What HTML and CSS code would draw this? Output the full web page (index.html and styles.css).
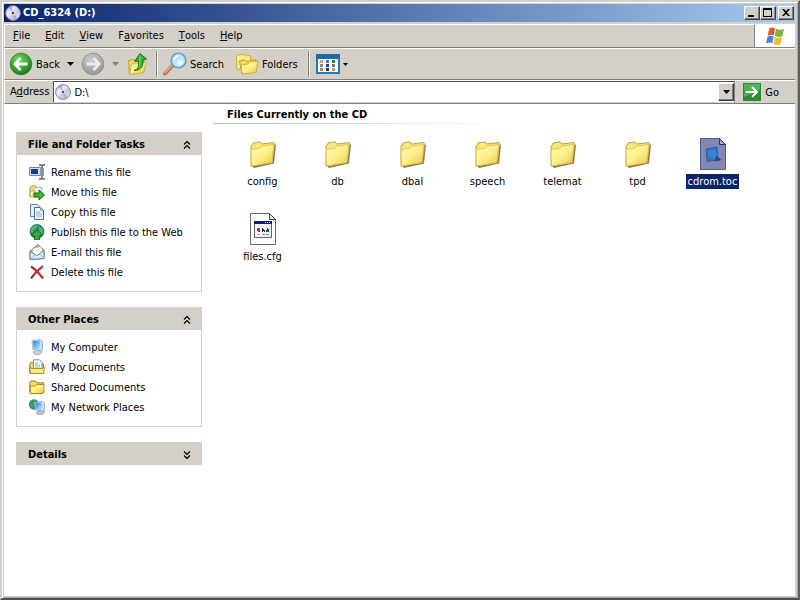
FILE: index.html
```html
<!DOCTYPE html>
<html lang="en">
<head>
    <meta charset="UTF-8">
    <meta name="viewport" content="width=device-width, initial-scale=1.0">
    <title>CD_6324 (D:)</title>
    <link rel="stylesheet" href="styles.css">
</head>
<body>
    <!-- shared icons -->
    <svg class="defs" aria-hidden="true">
        <defs>
            <linearGradient id="gFolder" x1="0" y1="0" x2="1" y2="1">
                <stop offset="0" stop-color="#fffcb8"/>
                <stop offset="0.5" stop-color="#fdf088"/>
                <stop offset="1" stop-color="#e9c440"/>
            </linearGradient>
            <linearGradient id="gScreen" x1="0" y1="0" x2="1" y2="1">
                <stop offset="0" stop-color="#2a62d8"/>
                <stop offset="0.4" stop-color="#58b4f4"/>
                <stop offset="1" stop-color="#b4ecff"/>
            </linearGradient>
            <radialGradient id="gGreen" cx="0.4" cy="0.3" r="0.7">
                <stop offset="0" stop-color="#7ad468"/>
                <stop offset="0.6" stop-color="#38a72c"/>
                <stop offset="1" stop-color="#1d7a18"/>
            </radialGradient>
            <radialGradient id="gGray" cx="0.4" cy="0.3" r="0.7">
                <stop offset="0" stop-color="#cccccc"/>
                <stop offset="1" stop-color="#989898"/>
            </radialGradient>
            <linearGradient id="gDisc" x1="0" y1="0" x2="1" y2="1">
                <stop offset="0" stop-color="#9c9ccc"/>
                <stop offset="0.35" stop-color="#f4f4ff"/>
                <stop offset="0.6" stop-color="#c4c4e4"/>
                <stop offset="1" stop-color="#ffffff"/>
            </linearGradient>
        </defs>
        <symbol id="disc" viewBox="0 0 16 16">
            <circle cx="8" cy="8" r="7.4" fill="url(#gDisc)" stroke="#74749c" stroke-width="0.9"/>
            <path d="M8 8 3 2.6A7 7 0 0 1 7 1zM8 8l5 5.4A7 7 0 0 1 9 15z" fill="#8c8cbc" opacity="0.55"/>
            <circle cx="8" cy="8" r="2.5" fill="#dcdcf0"/>
            <circle cx="8" cy="8" r="1.2" fill="#44446c"/>
        </symbol>
        <symbol id="folder" viewBox="0 0 32 32">
            <path d="M5 28 25 24.500 27.500 6 29 7 27 25.500 7 30z" fill="#6b5c2c" opacity="0.8"/>
            <path d="M4 28V8l1.500-1 .5-2 7-1.200L14.500 6 27 4.500l.5 2L25 24.500z" fill="#f8e67c" stroke="#c2a13c"/>
            <path d="M4 11.500 12.500 10.500 15 8l12-1.500L24.800 24.500 4.500 28z" fill="url(#gFolder)" stroke="#d9bf52" stroke-width="0.8"/>
        </symbol>
        <symbol id="smallFolder" viewBox="0 0 16 16">
            <path d="M.8 13.500V3.500L2 2h4.500L8 3.800h6.500v9.800l-1 1H2z" fill="#f6da63" stroke="#a57b17"/>
            <path d="M1.500 13.500V7h4.700L8 5.500h7v8l-1 1H2z" fill="url(#gFolder)" stroke="#a57b17" stroke-width="0.8"/>
        </symbol>
    </svg>

    <div class="window">
        <header class="titlebar">
            <svg class="icon16"><use href="#disc"/></svg>
            <h1>CD_6324 (D:)</h1>
            <div class="winbuttons">
                <button type="button" aria-label="Minimize"><svg viewBox="0 0 12 10"><path d="M2 7h6v2H2z"/></svg></button>
                <button type="button" aria-label="Maximize"><svg viewBox="0 0 12 10"><path d="M1 0h9v9H1zM2 2v6h7V2z" fill-rule="evenodd"/></svg></button>
                <button type="button" class="close" aria-label="Close"><svg viewBox="0 0 12 10"><path d="M2 1h2l2 2.300L8 1h2L7 4.500 10 8H8L6 5.700 4 8H2l3-3.500z"/></svg></button>
            </div>
        </header>

        <nav class="menubar">
            <button type="button"><u>F</u>ile</button>
            <button type="button"><u>E</u>dit</button>
            <button type="button"><u>V</u>iew</button>
            <button type="button">F<u>a</u>vorites</button>
            <button type="button"><u>T</u>ools</button>
            <button type="button"><u>H</u>elp</button>
            <div class="flag">
                <svg viewBox="0 0 20 20">
                    <path d="M4.200 2.500C6.500 1 8.300 1.300 10 2.300L8.800 9.500C7 8.500 5 8.500 2.800 9.800z" fill="#e5542b"/>
                    <path d="M11 2.700c2.300 1.300 4.500 1.200 8 .2L17.300 10c-2.500 1.200-5 1.200-7.500-.2z" fill="#7cb63a"/>
                    <path d="M2.500 10.700c2.200-1.300 4.200-1.400 6.100-.3L7.400 17.300c-1.800-1-3.900-1-6.400.3z" fill="#4a82d2"/>
                    <path d="M9.600 10.900c2.300 1.300 4.700 1.300 7.500.2l-1.300 7c-2.500 1.300-5 1.200-7.500-.2z" fill="#f4bf2c"/>
                </svg>
            </div>
        </nav>

        <div class="toolbar">
            <button type="button" class="tool">
                <svg class="icon24" viewBox="0 0 24 24">
                    <circle cx="12" cy="12" r="10.800" fill="url(#gGreen)" stroke="#2c7c26" stroke-width="0.8"/>
                    <path d="M11.500 6 6 12l5.500 6M6.500 12H18.500" fill="none" stroke="#fff" stroke-width="2.800"/>
                </svg>
                <span>Back</span>
            </button>
            <button type="button" class="drop" aria-label="Back history"><svg viewBox="0 0 7 4"><path d="M0 0h7L3.500 4z"/></svg></button>
            <button type="button" class="tool" aria-label="Forward" disabled>
                <svg class="icon24" viewBox="0 0 24 24">
                    <circle cx="12" cy="12" r="10.800" fill="url(#gGray)" stroke="#8c8c8c" stroke-width="0.8"/>
                    <path d="M12.500 6 18 12l-5.500 6M17.500 12H5.500" fill="none" stroke="#ececec" stroke-width="2.800"/>
                </svg>
            </button>
            <button type="button" class="drop" aria-label="Forward history" disabled><svg viewBox="0 0 7 4"><path d="M0 0h7L3.500 4z" fill="#808080"/></svg></button>
            <button type="button" class="tool" aria-label="Up">
                <svg class="icon24" viewBox="0 0 24 24">
                    <path d="M2.500 8.500 8 7.500l1.500 2L18 8v12L3.500 22.500z" fill="#f7dc62" stroke="#c69a2a"/>
                    <path d="M5.500 12 20 10l-2.500 10.500L3.500 22.500z" fill="url(#gFolder)" stroke="#d0a93a" stroke-width="0.8"/>
                    <path d="M8 18.500c4-1 5-4 4.500-9.500L8.500 9.500 14 1.500 20.500 7l-3.500.8C17.500 14 15 18.500 8 18.500z" fill="#38ad2e" stroke="#187818"/>
                    <path d="M14 3.500v8c0 2-.5 3.500-1.500 4.800" fill="none" stroke="#8ae070"/>
                </svg>
            </button>
            <div class="sep"></div>
            <button type="button" class="tool">
                <svg class="icon24" viewBox="0 0 24 24">
                    <path d="M9.500 13.500 2 21.500" stroke="#b87050" stroke-width="4" stroke-linecap="round"/>
                    <path d="M9 13 2 20.500" stroke="#eaa480" stroke-width="2" stroke-linecap="round"/>
                    <circle cx="15.500" cy="8.500" r="7.300" fill="#b9eafa" stroke="#6a9ccc" stroke-width="1.600"/>
                    <path d="M10.500 9a5 5 0 0 1 6-5.500c-2.500 1-4.500 3-6 5.500z" fill="#fff"/>
                    <circle cx="17" cy="10.500" r="2.800" fill="#e4faff"/>
                </svg>
                <span>Search</span>
            </button>
            <button type="button" class="tool folders">
                <svg class="icon24" viewBox="0 0 24 24">
                    <path d="M2 17.500 1.500 4 3.500 3 9 2l1.500 2 5-.8V15z" fill="#fbec86" stroke="#d3ad3a"/>
                    <path d="M7 22 4.500 9l5-1 1.500 1.500 10-2 .5 12z" fill="#f7dc62" stroke="#c69a2a"/>
                    <path d="M7 22 6 13l7-1 1.500-2 8.500-.8L21 20.500z" fill="url(#gFolder)" stroke="#cfa638" stroke-width="0.900"/>
                </svg>
                <span>Folders</span>
            </button>
            <div class="sep wide"></div>
            <button type="button" class="tool" aria-label="Views">
                <svg class="icon24" viewBox="0 0 24 24">
                    <path d="M1 4h22v17H1z" fill="#f4fafc" stroke="#2878b4" stroke-width="2"/>
                    <path d="M0 2h24v5H0z" fill="#1e68b0"/>
                    <path d="M4 8h3v3H4z" fill="#d0a080"/><path d="M10 8h3v3h-3z" fill="#4878b8"/><path d="M16 8h3v3h-3z" fill="#30803c"/>
                    <path d="M4 12h3v3H4z" fill="#808898"/><path d="M10 12h3v3h-3z" fill="#303c88"/><path d="M16 12h3v3h-3z" fill="#707880"/>
                    <path d="M4 16h3v3H4z" fill="#b88060"/><path d="M10 16h3v3h-3z" fill="#303848"/><path d="M16 16h3v3h-3z" fill="#c89070"/>
                </svg>
                <svg class="arrow" viewBox="0 0 5 3"><path d="M0 0h5L2.500 3z"/></svg>
            </button>
        </div>

        <form class="addressbar">
            <label for="address">A<u>d</u>dress</label>
            <div class="combo">
                <svg class="icon16"><use href="#disc"/></svg>
                <input type="text" id="address" value="D:\">
                <button type="button" class="pick" aria-label="Show addresses"><svg viewBox="0 0 7 4"><path d="M0 0h7L3.500 4z"/></svg></button>
            </div>
            <button type="button" class="go">
                <svg viewBox="0 0 18 18">
                    <path d="M0 0h18v18H0z" fill="#2c8c34"/>
                    <path d="M1 1h16v6L1 14z" fill="#55ad54"/>
                    <path d="M9 4l5 5-5 5M3 9h10" fill="none" stroke="#fff" stroke-width="2"/>
                </svg>
                <span>Go</span>
            </button>
        </form>

        <div class="content">
            <aside class="sidebar">
                <section class="panel">
                    <h2>File and Folder Tasks
                        <button type="button" aria-label="Collapse"><svg viewBox="0 0 8 8"><path d="M1 3.500l3-3 3 3M1 7.500l3-3 3 3" fill="none" stroke="#000" stroke-width="1.200"/></svg></button>
                    </h2>
                    <ul>
                        <li><a href="#">
                            <svg viewBox="0 0 16 16">
                                <path d="M.5 3.500h11v8H.5z" fill="#d8e0f0" stroke="#7484a4"/>
                                <path d="M2 5h7v5H2z" fill="#183c9c"/>
                                <path d="M10 1h2l1 1 1-1h2M13 2v12M10 15h2l1-1 1 1h2" fill="none" stroke="#50647c" stroke-width="1.400"/>
                                <path d="M11 4h1v8h-1zM14 4h1v8h-1z" fill="#8ca0b8"/>
                            </svg><span>Rename this file</span></a></li>
                        <li><a href="#">
                            <svg viewBox="0 0 16 16">
                                <path d="M1 12.500V3.500L2.500 2h4L8 3.500h4.500v9z" fill="#f8df74" stroke="#b18f35"/>
                                <path d="M5 4l6-1 2 2v7l-7 1z" fill="#f5f7ff" stroke="#a1a9bb" stroke-width="0.800"/>
                                <path d="M1 7h5l1 6H1z" fill="#fbeb96" stroke="#b18f35" stroke-width="0.700"/>
                                <path d="M5 9h5V6l5.500 5-5.500 5v-3H5z" fill="#3fb52f" stroke="#176a17"/>
                            </svg><span>Move this file</span></a></li>
                        <li><a href="#">
                            <svg viewBox="0 0 16 16">
                                <path d="M1.500.5h7l2 2v10h-9z" fill="#e2edf9" stroke="#5f87ab"/>
                                <path d="M5.500 3.500h6l3 3v9h-9z" fill="#f7fbff" stroke="#457498"/>
                                <path d="M11.500 3.500v3h3M7 8h4M7 10h6M7 12h6" fill="none" stroke="#83a9c9"/>
                            </svg><span>Copy this file</span></a></li>
                        <li><a href="#">
                            <svg viewBox="0 0 16 16">
                                <circle cx="8" cy="7.500" r="7" fill="#2a7f9e" stroke="#226552" stroke-width="0.800"/>
                                <path d="M2 4.500C4 1 7 .8 9 1.500L7 5 4.500 6 4 9 1.500 8zM10 2.500l4 2.500v4.500L11 8l-1.500-3z" fill="#55b757"/>
                                <path d="M8 6l6 5.500h-3.500V16h-5v-4.500H2z" fill="#35ab34" stroke="#176a1d" stroke-width="0.900"/>
                            </svg><span>Publish this file to the Web</span></a></li>
                        <li><a href="#">
                            <svg viewBox="0 0 16 16">
                                <path d="M1 7l8-6.500L15 6v8.500L1 15.500z" fill="#a5c5e4" stroke="#6184a8"/>
                                <path d="M3.500 4.500l8-2 2 3-1 6H4z" fill="#fffbe9" stroke="#d2a26b" stroke-width="0.800"/>
                                <path d="M1 7.500l7 4L15 6.500v8L1 15.500z" fill="#dceefa" stroke="#6184a8"/>
                                <path d="M1 15l5.500-4.500M15 14l-5-4" stroke="#8aa8c4" stroke-width="0.800"/>
                            </svg><span>E-mail this file</span></a></li>
                        <li><a href="#">
                            <svg viewBox="0 0 16 16">
                                <path d="M2 2.500C5 4.500 10 9 14 14.500M14 2C9 6 5 10 2 14.500" fill="none" stroke="#b3263c" stroke-width="2.200"/>
                            </svg><span>Delete this file</span></a></li>
                    </ul>
                </section>

                <section class="panel">
                    <h2>Other Places
                        <button type="button" aria-label="Collapse"><svg viewBox="0 0 8 8"><path d="M1 3.500l3-3 3 3M1 7.500l3-3 3 3" fill="none" stroke="#000" stroke-width="1.200"/></svg></button>
                    </h2>
                    <ul>
                        <li><a href="#">
                            <svg viewBox="0 0 16 16">
                                <path d="M4 13l5-2 4 1.500-2 2.800-5 .4z" fill="#d4cce4" stroke="#a092ac" stroke-width="0.700"/>
                                <path d="M3 1.500 11.500.5 13.500 2v9l-2 .8-7.500-1.300z" fill="#d4dcf0" stroke="#8ea6cd" stroke-width="0.800"/>
                                <path d="M4 2.300l7-.8v9L4.800 9.600z" fill="url(#gScreen)"/>
                            </svg><span>My Computer</span></a></li>
                        <li><a href="#">
                            <svg viewBox="0 0 16 16">
                                <path d="M.8 14V5l1-1.500h3L6 5h8.500v9z" fill="#f3d457" stroke="#a57b17"/>
                                <path d="M4.500.8h6l2.500 2.500V11h-8.500z" fill="#f8fbff" stroke="#7991b5"/>
                                <path d="M6 4h3M6 6h5M6 8h5" stroke="#8eaed1"/>
                                <path d="M.8 8.500L3 9.500h11l1.500-1.500-.7 6.500H1.500z" fill="#fae889" stroke="#a57b17" stroke-width="0.800"/>
                            </svg><span>My Documents</span></a></li>
                        <li><a href="#"><svg><use href="#smallFolder"/></svg><span>Shared Documents</span></a></li>
                        <li><a href="#">
                            <svg viewBox="0 0 16 16">
                                <circle cx="5" cy="5.500" r="4.800" fill="#2f8f98" stroke="#276771" stroke-width="0.700"/>
                                <path d="M2 3c2-2 4-2 5-1L5 5l-1 4-3-3z" fill="#3fa648"/>
                                <path d="M7 13.500l5-2 3.500 1.200-2 2.600-4.500.4z" fill="#cdc2de" stroke="#927ea5" stroke-width="0.700"/>
                                <path d="M5.500 3.500l8-1 2 1.300v7.700l-2 .7-7-1.200z" fill="#d4dcf0" stroke="#8ea6cd" stroke-width="0.800"/>
                                <path d="M6.500 4.300l6.500-.8v7.500l-6-.9z" fill="url(#gScreen)"/>
                            </svg><span>My Network Places</span></a></li>
                    </ul>
                </section>

                <section class="panel">
                    <h2>Details
                        <button type="button" aria-label="Expand"><svg viewBox="0 0 8 8"><path d="M1 .5l3 3 3-3M1 4.500l3 3 3-3" fill="none" stroke="#000" stroke-width="1.200"/></svg></button>
                    </h2>
                </section>
            </aside>

            <main class="files">
                <h2>Files Currently on the CD</h2>
                <div class="grid">
                    <a href="#" class="file"><svg><use href="#folder"/></svg><span>config</span></a>
                    <a href="#" class="file"><svg><use href="#folder"/></svg><span>db</span></a>
                    <a href="#" class="file"><svg><use href="#folder"/></svg><span>dbal</span></a>
                    <a href="#" class="file"><svg><use href="#folder"/></svg><span>speech</span></a>
                    <a href="#" class="file"><svg><use href="#folder"/></svg><span>telemat</span></a>
                    <a href="#" class="file"><svg><use href="#folder"/></svg><span>tpd</span></a>
                    <a href="#" class="file selected">
                        <svg viewBox="0 0 32 32">
                            <path d="M3.500.5h19l6 6v25h-25z" fill="#8087b4" stroke="#4f5a8a"/>
                            <path d="M22.500.5v6h6z" fill="#a1a7c8" stroke="#26356f"/>
                            <path d="M9 11l11-2 1 10 3 3-5 .5-9 1z" fill="#3b6cb8" stroke="#2f559e" stroke-width="0.700"/>
                            <circle cx="15.500" cy="15.500" r="4.500" fill="#2d86d8"/>
                            <path d="M19 18l5 4-6 1z" fill="#1c4496"/>
                        </svg><span>cdrom.toc</span></a>
                    <a href="#" class="file">
                        <svg viewBox="0 0 32 32">
                            <path d="M3.500.5h19l6 6v25h-25z" fill="#fff" stroke="#686868"/>
                            <path d="M22.500.5v6h6z" fill="#e4e4e4" stroke="#484848"/>
                            <path d="M7.500 8.500h17v16h-17z" fill="#f4f4f4" stroke="#606060"/>
                            <path d="M7 8h18v3H7z" fill="#10187c"/>
                            <path d="M18 9h1v1h-1zM20 9h1v1h-1zM22 9h1v1h-1z" fill="#fff"/>
                            <path d="M10 15h3v3h-3zM11 18h2v1h-2z" fill="#c42c44"/>
                            <path d="M15 15h1v1h1v1h1v2h-1v-1h-1v1h-1z" fill="#222"/>
                            <path d="M20 15h1v1h1v3h-3v-2h1z" fill="#24449c"/>
                            <path d="M10 21h3v1h-3z" fill="#e07c8c"/><path d="M15 21h3v1h-3zM19 21h3v1h-3z" fill="#6c8cc4"/>
                        </svg><span>files.cfg</span></a>
                </div>
            </main>
        </div>
    </div>
</body>
</html>
```
FILE: styles.css
```css
*{
    box-sizing: border-box;
}
body{
    margin: 0;
    font-family: Tahoma, "DejaVu Sans Condensed", "Noto Sans", sans-serif;
    font-size: 11px;
    line-height: 16px;
    color: #000;
}
h1, h2, ul{
    margin: 0;
    padding: 0;
    font-size: 11px;
}
ul{
    list-style: none;
}
svg{
    display: block;
    flex: none;
}
button{
    display: flex;
    align-items: center;
    padding: 0;
    border: none;
    background: none;
    font: inherit;
    color: inherit;
}
a{
    color: inherit;
    text-decoration: none;
}
.defs{
    position: absolute;
    width: 0;
    height: 0;
}
.icon16{
    width: 16px;
    height: 16px;
}
.icon24{
    width: 24px;
    height: 24px;
}
.window{
    display: flex;
    flex-direction: column;
    min-height: 100vh;
    padding: 2px 3px 2px 2px;
    background: #d4d0c8;
    border: 2px solid;
    border-color: #d4d0c8 #606060 #505050 #d4d0c8;
    box-shadow: inset 1px 1px #fff, inset -1px -1px #a8a8a8;
}

/* title bar */
.titlebar{
    display: flex;
    align-items: center;
    gap: 2px;
    height: 18px;
    padding: 0 1px;
    background: linear-gradient(to right, #0a246a, #a6caf0);
    color: #fff;
}
.titlebar h1{
    flex: 1;
}
.winbuttons{
    display: flex;
}
.winbuttons button{
    justify-content: center;
    width: 16px;
    height: 14px;
}
.winbuttons .close{
    margin-left: 2px;
}
.winbuttons svg{
    width: 12px;
    height: 10px;
}
.winbuttons button, .pick{
    background: #d4d0c8;
    border: 1px solid;
    border-color: #fff #404040 #404040 #fff;
    box-shadow: inset -1px -1px #808080;
}

/* menu, toolbar and address rows */
.menubar{
    display: flex;
    align-items: stretch;
    gap: 1px;
    height: 24px;
    margin-top: 2px;
    padding-left: 1px;
    border-top: 1px solid #fff;
    border-bottom: 1px solid #808080;
    border-left: 1px solid #fff;
}
.menubar button{
    padding: 0 7px;
}
.flag{
    display: flex;
    align-items: center;
    justify-content: center;
    width: 41px;
    margin-left: auto;
    background: #fff;
    border-left: 1px solid #808080;
}
.flag svg{
    width: 20px;
    height: 20px;
}
.toolbar{
    display: flex;
    align-items: center;
    height: 32px;
    padding-left: 4px;
    border-top: 1px solid #fff;
    border-bottom: 1px solid #808080;
    border-left: 1px solid #fff;
}
.tool{
    gap: 3px;
}
.tool span, .go span, .panel a span{
    padding-top: 2px;
}
.drop{
    justify-content: center;
    width: 21px;
}
.drop svg, .pick svg{
    width: 7px;
    height: 4px;
}
.sep{
    width: 2px;
    height: 26px;
    margin: 0 5px 0 6px;
    border-left: 1px solid #808080;
    border-right: 1px solid #fff;
}
.sep.wide{
    margin: 0 6px 0 10px;
}
.folders{
    margin-left: 11px;
}
.arrow{
    width: 5px;
    height: 3px;
}
.addressbar{
    display: flex;
    align-items: center;
    height: 24px;
    padding: 0 16px 0 5px;
    border-top: 1px solid #fff;
    border-bottom: 1px solid #808080;
    border-left: 1px solid #fff;
}
.combo{
    display: flex;
    align-items: center;
    flex: 1;
    height: 22px;
    margin: 0 8px 0 4px;
    padding-left: 1px;
    background: #fff;
    border: 1px solid;
    border-color: #505050 #808080 #d4d0c8 #505050;
}
.combo input{
    flex: 1;
    min-width: 0;
    padding: 2px 3px 0;
    border: none;
    outline: none;
    background: none;
    font: inherit;
}
.pick{
    justify-content: center;
    width: 16px;
    height: 18px;
}
.go{
    gap: 4px;
}
.go svg{
    width: 18px;
    height: 18px;
}

/* folder contents */
.content{
    display: flex;
    flex: 1;
    background: #fff;
}
.sidebar{
    display: flex;
    flex-direction: column;
    gap: 15px;
    flex: none;
    width: 209px;
    padding: 28px 11px 16px 12px;
}
.panel h2{
    display: flex;
    align-items: center;
    justify-content: space-between;
    height: 23px;
    padding: 2px 11px 0 12px;
    background: #d4d0c8;
}
.panel svg{
    width: 16px;
    height: 16px;
}
.panel h2 svg{
    width: 8px;
    height: 8px;
}
.panel ul{
    padding: 7px 12px 9px;
    border: 1px solid #d4d0c8;
    border-top: none;
}
.panel a{
    display: flex;
    align-items: center;
    gap: 6px;
    height: 20px;
    white-space: nowrap;
}
.files{
    flex: 1;
    min-width: 0;
}
.files h2{
    width: 290px;
    height: 20px;
    padding: 3px 0 0 14px;
    background: linear-gradient(to right, #9cc4d8, #fff) bottom / 100% 1px no-repeat;
}
.grid{
    display: grid;
    grid-template-columns: repeat(auto-fill, 75px);
    grid-auto-rows: 75px;
    padding: 14px 0 0 12px;
}
.file{
    display: flex;
    flex-direction: column;
    align-items: center;
    gap: 4px;
}
.file svg{
    width: 32px;
    height: 32px;
}
.file span{
    padding: 0 2px;
    line-height: 15px;
}
.selected span{
    background: #0a246a;
    color: #fff;
}
```
